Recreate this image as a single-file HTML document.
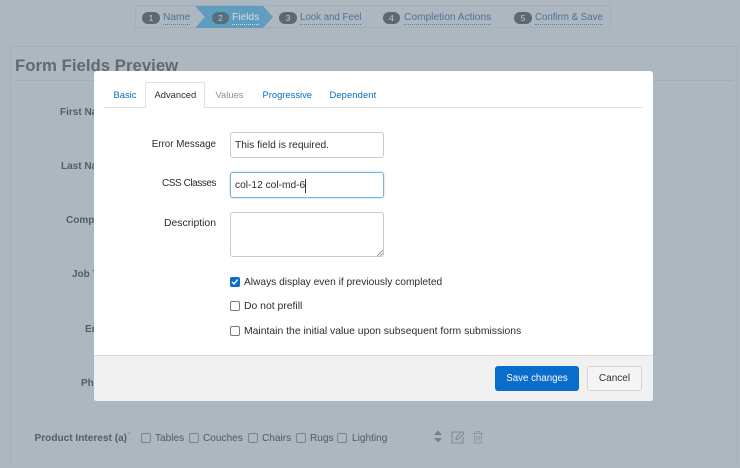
<!DOCTYPE html>
<html style="width:740px;height:468px;overflow:hidden">
<head>
<meta charset="utf-8">
<style>
html,body{margin:0;padding:0}
body{width:740px;height:468px;overflow:hidden;position:relative;background:#adb7bf;font-family:"Liberation Sans",sans-serif;color:#2b2f33}
#w{position:absolute;left:0;top:0;width:740px;height:468px;overflow:hidden;background:#adb7bf;filter:blur(.3px)}
.a{position:absolute;white-space:nowrap}
.step{font-size:10.2px;line-height:14px;color:#4d7296;border-bottom:1px dotted #5d7f9f;height:13px}
.num{position:absolute;width:18px;height:12px;top:12px;border-radius:6px;background:#5c6872;color:#c3cad0;font-size:8.5px;line-height:12px;text-align:center}
.bl{color:#535d65;font-weight:bold;font-size:10px;line-height:14px;position:absolute;white-space:nowrap}
.tab{position:absolute;top:88px;font-size:9.4px;line-height:13px;white-space:nowrap;color:#0a6cb8}
.inp{position:absolute;left:230px;box-sizing:border-box;width:154px;background:#fff;border:1px solid #c9c9c9;border-radius:3px}
.lab{position:absolute;font-size:10px;line-height:14px;color:#2c2c2c;right:524px;white-space:nowrap}
.cb{position:absolute;left:230px;width:9.5px;height:9.5px;box-sizing:border-box;border:1px solid #77797c;border-radius:2px;background:#fff}
.cl{position:absolute;left:244px;font-size:10.2px;line-height:14px;color:#2c2c2c;white-space:nowrap}
.pc{position:absolute;top:433px;width:9.5px;height:9.5px;box-sizing:border-box;border:1px solid #79848d;border-radius:2px}
.pl{position:absolute;top:432px;font-size:10.1px;line-height:14px;color:#4f5a63;white-space:nowrap}
</style>
</head>
<body>
<div id="w">
<!-- wizard -->
<div class="a" style="left:135px;top:5px;width:476px;height:23px;box-sizing:border-box;border:1px solid #a3afb8;border-radius:2px"></div>
<svg class="a" style="left:195px;top:6px" width="79" height="23"><polygon points="0,0 68,0 78,11 68,22 0,22 10,11" fill="#5f9cbd"/></svg>
<div class="num" style="left:142px">1</div>
<div class="a step" style="left:163px;top:11px">Name</div>
<div class="num" style="left:212px;width:17px;background:#54707f">2</div>
<div class="a step" style="left:232px;top:11px;color:#d0dfe8;border-color:#d0dfe8">Fields</div>
<div class="num" style="left:279px">3</div>
<div class="a step" style="left:300px;top:11px;font-size:9.7px">Look and Feel</div>
<div class="num" style="left:383px;width:17px">4</div>
<div class="a step" style="left:404px;top:11px">Completion Actions</div>
<div class="num" style="left:514px">5</div>
<div class="a step" style="left:535px;top:11px;font-size:9.7px">Confirm &amp; Save</div>

<!-- panel -->
<div class="a" style="left:10px;top:46px;width:728px;height:421px;box-sizing:border-box;border:1px solid #a2adb5;border-bottom:0"></div>
<div class="a" style="left:15px;top:55px;font-size:16.8px;line-height:21px;font-weight:bold;color:#5f6a73">Form Fields Preview</div>
<div class="a" style="left:15px;top:80px;width:718px;height:1px;background:#a2adb5"></div>
<div class="bl" style="top:106px;left:60px">First Na</div>
<div class="bl" style="top:160px;left:61px">Last Na</div>
<div class="bl" style="top:214px;left:66px">Comp</div>
<div class="bl" style="top:268px;left:72px">Job T</div>
<div class="bl" style="top:323px;left:85px">En</div>
<div class="bl" style="top:377px;left:81px">Pho</div>

<!-- product interest row -->
<div class="a" style="left:34.5px;top:432px;font-size:10.1px;line-height:14px;font-weight:bold;color:#535d65">Product Interest (a)</div>
<div class="a" style="left:127px;top:430px;font-size:9px;line-height:10px;color:#b58a7c">*</div>
<div class="pc" style="left:141px"></div><div class="pl" style="left:155px">Tables</div>
<div class="pc" style="left:189px"></div><div class="pl" style="left:203px">Couches</div>
<div class="pc" style="left:248px"></div><div class="pl" style="left:262px">Chairs</div>
<div class="pc" style="left:296px"></div><div class="pl" style="left:310px">Rugs</div>
<div class="pc" style="left:337px"></div><div class="pl" style="left:352px">Lighting</div>
<svg class="a" style="left:430px;top:428px" width="60" height="20">
  <path d="M4 7 L8 2.5 L12 7Z M4 10 L8 14.5 L12 10Z" fill="#74808a"/>
  <path d="M31 4 H22 V15 H33 V9" fill="none" stroke="#808c95" stroke-width="1.1"/>
  <path d="M26 11.5 L26.5 9 L32 3.5 L34 5.5 L28.5 11Z" fill="none" stroke="#808c95" stroke-width="1.1"/>
  <path d="M43 5.5 H53 M44.5 5.5 V15 H51.5 V5.5 M46 5 V3.5 H50 V5 M46.8 8 V12.5 M49.2 8 V12.5" fill="none" stroke="#8d98a1" stroke-width="1.1"/>
</svg>

<!-- modal -->
<div class="a" style="left:94px;top:71px;width:559px;height:330px;background:#fff;border-radius:3px;overflow:hidden">
  <div class="a" style="left:0;top:284px;width:559px;height:46px;background:#f2f1f1;border-top:1px solid #d9d7d7;box-sizing:border-box"></div>
  <div class="a" style="left:401px;top:295px;width:84px;height:25px;background:#0a6ccb;border-radius:3px;color:#fff;font-size:9.7px;line-height:26px;text-align:center">Save changes</div>
  <div class="a" style="left:493px;top:295px;width:55px;height:25px;box-sizing:border-box;background:#f5f4f4;border:1px solid #d5d3d3;border-radius:3px;color:#333;font-size:10px;line-height:24px;text-align:center">Cancel</div>
</div>

<!-- tabs -->
<div class="a" style="left:104px;top:107px;width:539px;height:1px;background:#dfdfdf"></div>
<div class="a" style="left:145px;top:82px;width:60px;height:26px;box-sizing:border-box;background:#fff;border:1px solid #e0e0e0;border-bottom:0;border-radius:2px 2px 0 0"></div>
<div class="tab" style="left:113.5px">Basic</div>
<div class="tab" style="left:154.5px;color:#2f2f2f">Advanced</div>
<div class="tab" style="left:215.5px;color:#8f8f8f">Values</div>
<div class="tab" style="left:262.5px">Progressive</div>
<div class="tab" style="left:329.5px;letter-spacing:.1px">Dependent</div>

<!-- form -->
<div class="lab" style="top:138px;font-size:9.8px">Error Message</div>
<div class="lab" style="top:177px;font-size:10px;letter-spacing:-.45px">CSS Classes</div>
<div class="lab" style="top:217px;font-size:10.4px">Description</div>

<div class="inp" style="top:132px;height:26px"></div>
<div class="a" style="left:235px;top:139px;font-size:10.2px;line-height:14px;color:#2c2c2c">This field is required.</div>
<div class="inp" style="top:172px;height:26px;border-color:#74b2e2;box-shadow:0 0 2px #a9d2f0"></div>
<div class="a" style="left:235px;top:179px;font-size:10.2px;line-height:14px;color:#2c2c2c;border-right:1px solid #333">col-12 col-md-6</div>
<div class="inp" style="top:212px;height:45px"></div>
<svg class="a" style="left:377px;top:250px" width="6" height="6"><path d="M0 6 L6 0 M3 6 L6 3" stroke="#888" stroke-width=".8"/></svg>

<div class="cb" style="top:277px;background:#0a6ccb;border-color:#0a6ccb"></div>
<svg class="a" style="left:230px;top:277px" width="10" height="10"><path d="M2 4.9 L4 7 L7.6 2.6" fill="none" stroke="#fff" stroke-width="1.4"/></svg>
<div class="cl" style="top:276px">Always display even if previously completed</div>
<div class="cb" style="top:301px"></div>
<div class="cl" style="top:300px;font-size:10.4px">Do not prefill</div>
<div class="cb" style="top:326px"></div>
<div class="cl" style="top:325px;font-size:10.4px">Maintain the initial value upon subsequent form submissions</div>
</div>
</body>
</html>
